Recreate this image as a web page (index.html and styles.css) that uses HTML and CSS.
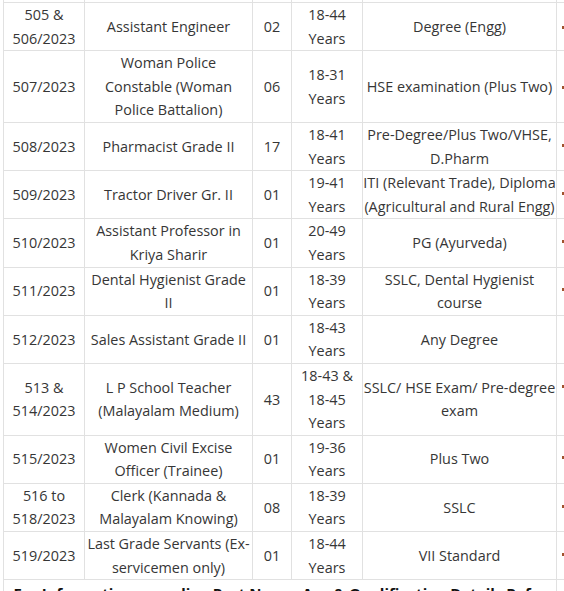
FILE: index.html
```html
<!DOCTYPE html>
<html>
<head>
<meta charset="utf-8">
<link rel="stylesheet" href="styles.css">
</head>
<body>
<div class="wrap">
<table class="posts">
<colgroup>
<col class="c-cat"><col class="c-post"><col class="c-no"><col class="c-age"><col class="c-qual"><col class="c-more">
</colgroup>
<tr class="stub"><td></td><td></td><td></td><td></td><td></td><td></td></tr>
<tr><td>505 &amp;<br>506/2023</td><td>Assistant Engineer</td><td>02</td><td>18-44<br>Years</td><td>Degree (Engg)</td><td class="more"><span class="dot"></span></td></tr>
<tr><td>507/2023</td><td>Woman Police<br>Constable (Woman<br>Police Battalion)</td><td>06</td><td>18-31<br>Years</td><td>HSE examination (Plus Two)</td><td class="more"><span class="dot"></span></td></tr>
<tr><td>508/2023</td><td>Pharmacist Grade II</td><td>17</td><td>18-41<br>Years</td><td>Pre-Degree/Plus Two/VHSE,<br>D.Pharm</td><td class="more top"><span class="dot"></span></td></tr>
<tr><td>509/2023</td><td>Tractor Driver Gr. II</td><td>01</td><td>19-41<br>Years</td><td>ITI (Relevant Trade), Diploma<br>(Agricultural and Rural Engg)</td><td class="more top"><span class="dot"></span></td></tr>
<tr><td>510/2023</td><td>Assistant Professor in<br>Kriya Sharir</td><td>01</td><td>20-49<br>Years</td><td>PG (Ayurveda)</td><td class="more top"><span class="dot"></span></td></tr>
<tr><td>511/2023</td><td>Dental Hygienist Grade<br>II</td><td>01</td><td>18-39<br>Years</td><td>SSLC, Dental Hygienist<br>course</td><td class="more top"><span class="dot"></span></td></tr>
<tr><td>512/2023</td><td>Sales Assistant Grade II</td><td>01</td><td>18-43<br>Years</td><td>Any Degree</td><td class="more"></td></tr>
<tr><td>513 &amp;<br>514/2023</td><td>L P School Teacher<br>(Malayalam Medium)</td><td>43</td><td>18-43 &amp;<br>18-45<br>Years</td><td>SSLC/ HSE Exam/ Pre-degree<br>exam</td><td class="more top"><span class="dot"></span></td></tr>
<tr><td>515/2023</td><td>Women Civil Excise<br>Officer (Trainee)</td><td>01</td><td>19-36<br>Years</td><td>Plus Two</td><td class="more top"><span class="dot"></span></td></tr>
<tr><td>516 to<br>518/2023</td><td>Clerk (Kannada &amp;<br>Malayalam Knowing)</td><td>08</td><td>18-39<br>Years</td><td>SSLC</td><td class="more top"><span class="dot"></span></td></tr>
<tr><td>519/2023</td><td>Last Grade Servants (Ex-<br>servicemen only)</td><td>01</td><td>18-44<br>Years</td><td>VII Standard</td><td class="more top"><span class="dot"></span></td></tr>
<tr class="note"><td colspan="5">For Information regarding Post Name, Age &amp; Qualification Details Refer Notification</td><td></td></tr>
</table>
</div>
</body>
</html>
```
FILE: styles.css
```css
html, body {
  margin: 0;
  padding: 0;
  background: #ffffff;
  overflow: hidden;
}
.wrap {
  padding-left: 3px;
  width: 700px;
}
.posts {
  border-collapse: collapse;
  table-layout: fixed;
  width: 653px;
  font-family: "Open Sans", "Noto Sans", sans-serif;
  font-size: 14.4px;
  line-height: 23.6px;
  color: #363636;
}
.c-cat { width: 81px; }
.c-post { width: 168px; }
.c-no { width: 39px; }
.c-age { width: 71px; }
.c-qual { width: 194px; }
.c-more { width: 100px; }
.posts td {
  border: 1px solid #e1e1e1;
  text-align: center;
  vertical-align: middle;
  padding: 0;
  white-space: nowrap;
  overflow: hidden;
}
.posts .stub td {
  height: 2px;
  padding: 0;
  line-height: 0;
  border-top: none;
}
.posts td.more {
  text-align: left;
  padding-left: 5px;
  vertical-align: middle;
}
.posts td.more.top {
  vertical-align: top;
  padding-top: 9px;
}
.dot {
  display: inline-block;
  width: 2px;
  height: 3px;
  background: #a0522d;
  vertical-align: middle;
}
.posts .note td {
  font-weight: bold;
  font-size: 15px;
  line-height: 20px;
  color: #111111;
  padding-top: 3px;
  white-space: normal;
}
```
